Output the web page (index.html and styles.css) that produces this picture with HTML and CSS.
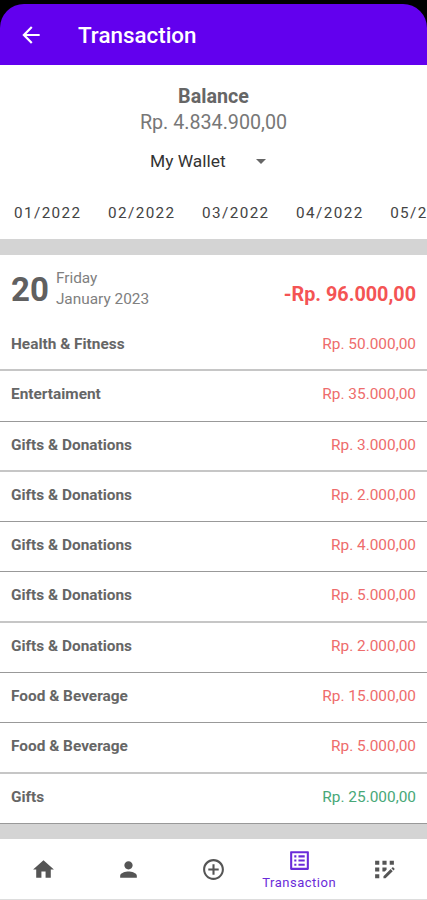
FILE: index.html
```html
<!DOCTYPE html>
<html lang="en">
<head>
<meta charset="utf-8">
<title>Transaction</title>
<link rel="stylesheet" href="styles.css">
</head>
<body>
<header class="appbar">
  <svg class="back" viewBox="0 0 24 24"><path d="M20 11H7.83l5.59-5.59L12 4l-8 8 8 8 1.41-1.41L7.83 13H20v-2z"/></svg>
  <h1>Transaction</h1>
</header>
<section class="summary">
  <div class="label">Balance</div>
  <div class="balance">Rp. 4.834.900,00</div>
  <div class="wallet"><span>My Wallet</span><svg viewBox="0 0 24 24"><path d="M7 10l5 5 5-5z"/></svg></div>
  <nav class="months"><span>01/2022</span><span>02/2022</span><span>03/2022</span><span>04/2022</span><span>05/2022</span></nav>
</section>
<main class="feed">
  <section class="day">
    <div class="dayhead">
      <div class="num">20</div>
      <div class="date"><div>Friday</div><div>January 2023</div></div>
      <div class="total">-Rp. 96.000,00</div>
    </div>
    <div class="row soft"><b>Health &amp; Fitness</b><span>Rp. 50.000,00</span></div>
    <div class="row"><b>Entertaiment</b><span>Rp. 35.000,00</span></div>
    <div class="row soft"><b>Gifts &amp; Donations</b><span>Rp. 3.000,00</span></div>
    <div class="row"><b>Gifts &amp; Donations</b><span>Rp. 2.000,00</span></div>
    <div class="row"><b>Gifts &amp; Donations</b><span>Rp. 4.000,00</span></div>
    <div class="row soft"><b>Gifts &amp; Donations</b><span>Rp. 5.000,00</span></div>
    <div class="row"><b>Gifts &amp; Donations</b><span>Rp. 2.000,00</span></div>
    <div class="row"><b>Food &amp; Beverage</b><span>Rp. 15.000,00</span></div>
    <div class="row soft"><b>Food &amp; Beverage</b><span>Rp. 5.000,00</span></div>
    <div class="row"><b>Gifts</b><span class="income">Rp. 25.000,00</span></div>
  </section>
</main>
<nav class="tabs">
  <div class="tab"><svg viewBox="0 0 24 24"><path d="M10 20v-6h4v6h5v-8h3L12 3 2 12h3v8z"/></svg></div>
  <div class="tab"><svg viewBox="0 0 24 24"><path d="M12 12c2.210 0 4-1.790 4-4s-1.790-4-4-4-4 1.790-4 4 1.790 4 4 4zm0 2c-2.670 0-8 1.340-8 4v2h16v-2c0-2.660-5.330-4-8-4z"/></svg></div>
  <div class="tab"><svg viewBox="0 0 24 24"><path d="M13 7h-2v4H7v2h4v4h2v-4h4v-2h-4V7zm-1-5C6.480 2 2 6.480 2 12s4.480 10 10 10 10-4.480 10-10S17.520 2 12 2zm0 18c-4.410 0-8-3.590-8-8s3.590-8 8-8 8 3.590 8 8-3.590 8-8 8z"/></svg></div>
  <div class="tab active"><svg viewBox="0 0 24 24"><path d="M11 7h6v2h-6zm0 4h6v2h-6zm0 4h6v2h-6zM7 7h2v2H7zm0 4h2v2H7zm0 4h2v2H7zM20.100 3H3.900c-.5 0-.9.4-.9.9v16.200c0 .4.4.9.9.9h16.200c.4 0 .9-.5.9-.9V3.900c0-.5-.5-.9-.9-.9zM19 19H5V5h14v14z"/></svg><span>Transaction</span></div>
  <div class="tab"><svg viewBox="0 0 24 24"><path d="M3 3.500h4v4H3zM10 3.500h4v4h-4zM17 3.500h4v4h-4zM3 10h4v4H3zM10 10h4v2.300L12.300 14H10zM3 16.500h4v4H3zM11 18.500l6.900-6.900 2 2-6.900 6.900h-2zM20.600 12.900l-2-2 .9-.9c.3-.3.7-.3 1 0l1 1c.3.3.3.700 0 1z"/></svg></div>
</nav>
</body>
</html>
```
FILE: styles.css
```css
* { box-sizing: border-box; }
body {
  margin: 0;
  width: 427px;
  height: 900px;
  overflow: hidden;
  display: flex;
  flex-direction: column;
  background: #000;
  color: #666;
  font-family: Roboto, "Liberation Sans", sans-serif;
  font-size: 15.4px;
}
svg { display: block; width: 26px; height: 26px; fill: currentColor; }
.appbar {
  height: 61px;
  margin-top: 4px;
  flex: none;
  display: flex;
  align-items: center;
  padding-left: 18px;
  background: #6200ee;
  color: #fff;
  border-radius: 24px 24px 0 0;
}
.appbar h1 { margin: 1px 0 0 34px; font-size: 22.4px; line-height: 26px; font-weight: 500; }
.summary {
  height: 174px;
  flex: none;
  background: #fff;
  padding-top: 19px;
  text-align: center;
  overflow: hidden;
}
.label, .balance { font-size: 19.7px; line-height: 26px; }
.label { font-weight: 700; }
.balance { color: #777; }
.wallet {
  display: flex;
  align-items: center;
  height: 26px;
  margin: 12px 0 0 150px;
  font-size: 17.4px;
  color: #333;
}
.wallet svg { width: 24px; height: 24px; margin-left: 23px; color: #666; }
.months {
  display: flex;
  gap: 26.5px;
  margin-top: 26px;
  padding-left: 14px;
  line-height: 26px;
  font-size: 15.25px;
  letter-spacing: 1.4px;
  color: #444;
}
.months span { flex: none; }
.feed { height: 600px; flex: none; padding: 16px 0 15px; background: #d4d4d4; }
.day { background: #fff; }
.dayhead { height: 66px; padding: 2px 11px 0; display: flex; align-items: center; }
.num { font-size: 33px; font-weight: 700; color: #606060; }
.date { margin-left: 7px; line-height: 21px; color: #808080; }
.total { margin-left: auto; padding-top: 10px; font-size: 19.8px; font-weight: 700; color: #f45454; }
.row {
  height: 50.3px;
  display: flex;
  justify-content: space-between;
  align-items: center;
  padding: 0 11px 3.3px;
  border-bottom: 1px solid #999;
}
.soft { border-bottom: 2px solid #c6c6c6; padding-bottom: 2.3px; }
.row b { font-weight: 700; }
.row span { color: #ee6c6c; }
.row .income { color: #48a878; }
.tabs {
  height: 61px;
  flex: none;
  display: grid;
  grid-template-columns: repeat(5, 1fr);
  padding-left: 1px;
  background: #fff;
  border-bottom: 1px solid #ddd;
}
.tab { display: flex; flex-direction: column; align-items: center; justify-content: center; color: #555; }
.tab svg { width: 25px; height: 25px; }
.active { color: #6a2bd9; padding-top: 2px; }
.active span { margin-top: 1px; font-size: 13px; line-height: 18px; letter-spacing: .5px; }
```
